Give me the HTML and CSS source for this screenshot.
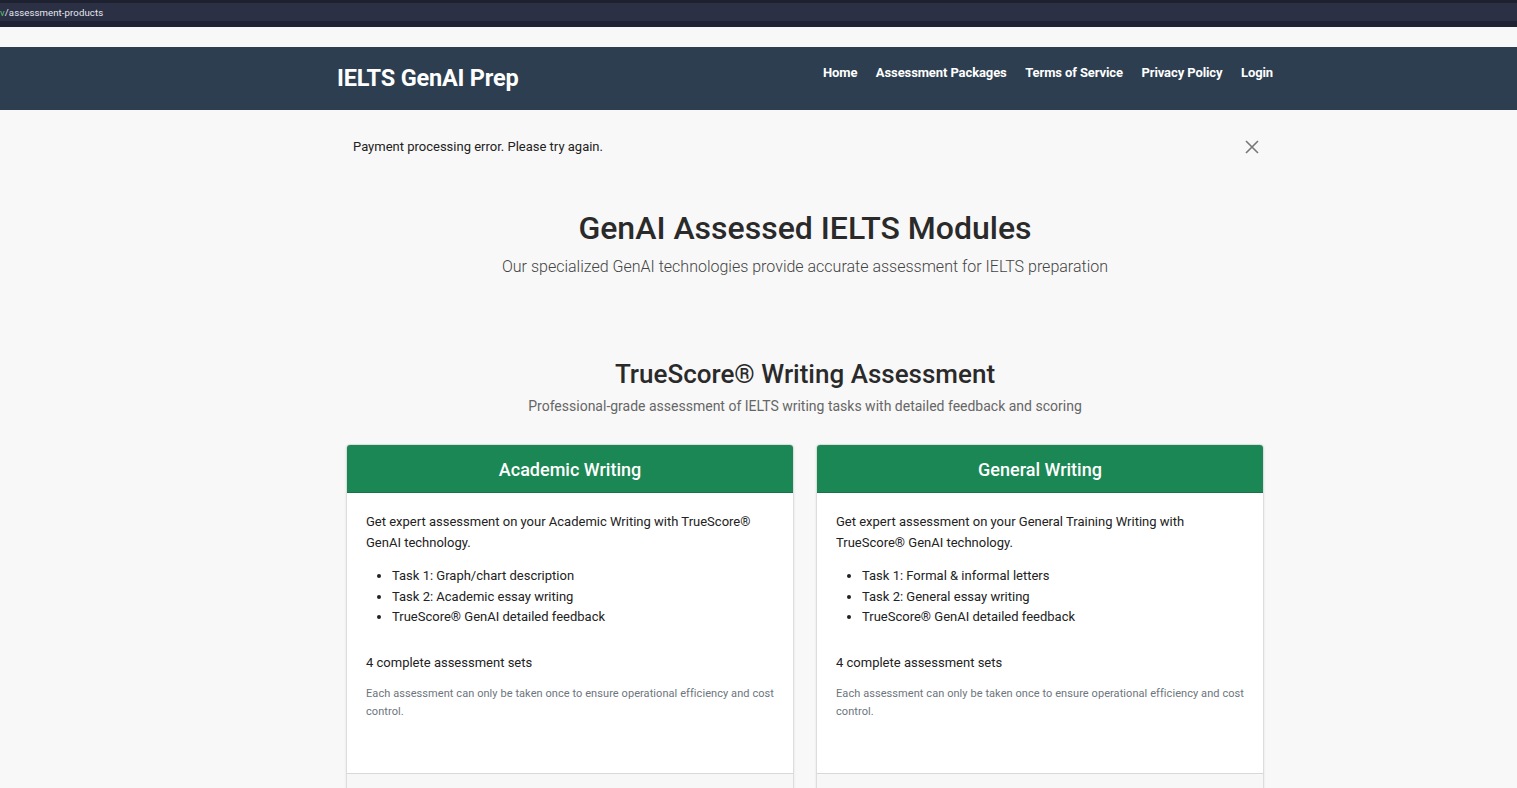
FILE: index.html
```html
<!DOCTYPE html>
<html lang="en">
<head>
<meta charset="utf-8">
<title>IELTS GenAI Prep - Assessment Products</title>
<link rel="stylesheet" href="styles.css">
</head>
<body>
<div class="chrome">
  <div class="chrome-bar"><span class="url"><span class="url-host">v</span>/assessment-products</span></div>
  <div class="chrome-edge"></div>
</div>
<div class="spacer"></div>
<nav class="navbar">
  <div class="container nav-inner">
    <a class="brand" href="#">IELTS GenAI Prep</a>
    <ul class="nav-links">
      <li><a href="#">Home</a></li>
      <li><a href="#">Assessment Packages</a></li>
      <li><a href="#">Terms of Service</a></li>
      <li><a href="#">Privacy Policy</a></li>
      <li><a href="#">Login</a></li>
    </ul>
  </div>
</nav>
<main class="container">
  <div class="alert">
    <span>Payment processing error. Please try again.</span>
    <button class="close" aria-label="Close">
      <svg width="14" height="14" viewBox="0 0 14 14"><path d="M1 1L13 13M13 1L1 13" stroke="#777" stroke-width="1.6" fill="none"/></svg>
    </button>
  </div>
  <header class="hero">
    <h1>GenAI Assessed IELTS Modules</h1>
    <p class="lead">Our specialized GenAI technologies provide accurate assessment for IELTS preparation</p>
  </header>
  <section class="section">
    <h2>TrueScore® Writing Assessment</h2>
    <p class="section-sub">Professional-grade assessment of IELTS writing tasks with detailed feedback and scoring</p>
    <div class="cards">
      <div class="card">
        <div class="card-header">Academic Writing</div>
        <div class="card-body">
          <p>Get expert assessment on your Academic Writing with TrueScore® GenAI technology.</p>
          <ul>
            <li>Task 1: Graph/chart description</li>
            <li>Task 2: Academic essay writing</li>
            <li>TrueScore® GenAI detailed feedback</li>
          </ul>
          <p class="sets">4 complete assessment sets</p>
          <p class="note">Each assessment can only be taken once to ensure operational efficiency and cost control.</p>
        </div>
        <div class="card-footer"></div>
      </div>
      <div class="card">
        <div class="card-header">General Writing</div>
        <div class="card-body">
          <p>Get expert assessment on your General Training Writing with TrueScore® GenAI technology.</p>
          <ul>
            <li>Task 1: Formal &amp; informal letters</li>
            <li>Task 2: General essay writing</li>
            <li>TrueScore® GenAI detailed feedback</li>
          </ul>
          <p class="sets">4 complete assessment sets</p>
          <p class="note">Each assessment can only be taken once to ensure operational efficiency and cost control.</p>
        </div>
        <div class="card-footer"></div>
      </div>
    </div>
  </section>
</main>
</body>
</html>
```

FILE: styles.css
```css
* { box-sizing: border-box; }
html, body { margin: 0; padding: 0; }
body {
  font-family: Roboto, "Liberation Sans", Arial, sans-serif;
  background: #f8f8f8;
  color: #333;
  overflow: hidden;
}
.chrome { background: #1e2130; padding-top: 3px; }
.chrome-bar {
  height: 18px;
  background: #2b3045;
  display: flex;
  align-items: center;
}
.url { font-size: 9.6px; color: #e6e8ee; letter-spacing: 0.1px; }
.url-host { color: #5fbf6a; }
.chrome-edge { height: 6px; background: #1f2333; }
.spacer { height: 20px; background: #f8f8f8; }

.container { width: 936px; margin-left: calc(50% - 421.5px); }

.navbar { background: #2c3e50; height: 63px; }
.nav-inner {
  display: flex;
  justify-content: space-between;
  align-items: flex-start;
  height: 100%;
}
.brand {
  color: #fff;
  text-decoration: none;
  font-weight: 700;
  font-size: 23.5px;
  line-height: 28px;
  margin-top: 17px;
  letter-spacing: -0.2px;
}
.nav-links {
  list-style: none;
  display: flex;
  gap: 18.5px;
  margin: 15px 0 0;
  padding: 0;
}
.nav-links a {
  color: #fff;
  text-decoration: none;
  font-weight: 700;
  font-size: 13px;
  line-height: 18px;
  letter-spacing: -0.1px;
}

.alert {
  display: flex;
  justify-content: space-between;
  align-items: center;
  padding: 0 14px 0 16px;
  margin-top: 29px;
  font-size: 13px;
  color: #222;
}
.close {
  background: none;
  border: 0;
  padding: 0;
  width: 14px;
  height: 14px;
  cursor: pointer;
  display: flex;
}

.hero { text-align: center; margin-top: 54px; }
.hero h1 {
  font-size: 32px;
  font-weight: 500;
  margin: 0;
  line-height: 40px;
  color: #2a2a2a;
}
.lead {
  font-size: 16px;
  font-weight: 300;
  color: #444;
  margin: 8px 0 0;
  line-height: 22px;
}

.section { text-align: center; margin-top: 80px; }
.section h2 {
  font-size: 26px;
  font-weight: 500;
  margin: 0;
  line-height: 32px;
  color: #2a2a2a;
}
.section-sub {
  font-size: 14px;
  color: #666;
  margin: 7px 0 0;
  line-height: 18px;
}

.cards {
  display: grid;
  grid-template-columns: 1fr 1fr;
  gap: 22px;
  margin: 29px 9px 0;
  text-align: left;
}
.card {
  background: #fff;
  border: 1px solid #ddd;
  border-radius: 4px;
  box-shadow: 0 1px 3px rgba(0,0,0,0.08);
  overflow: hidden;
  display: flex;
  flex-direction: column;
  height: 360px;
}
.card-header {
  background: #1a8754;
  color: #fff;
  text-align: center;
  font-size: 18px;
  font-weight: 500;
  height: 48px;
  line-height: 49px;
  border-bottom: 1px solid #157347;
}
.card-body {
  padding: 18px 15px 0 19px;
  height: 280px;
  font-size: 13px;
  color: #222;
}
.card-body p { margin: 0; line-height: 21px; }
.card-body ul {
  margin: 13px 0 0;
  padding-left: 26px;
  line-height: 20.5px;
}
.sets { margin-top: 24px !important; }
.note {
  margin-top: 12px !important;
  font-size: 11px;
  letter-spacing: 0.07px;
  line-height: 18px !important;
  color: #6c757d;
}
.card-footer {
  flex: 1;
  background: #f7f7f7;
  border-top: 1px solid #d8d8d8;
}
```
